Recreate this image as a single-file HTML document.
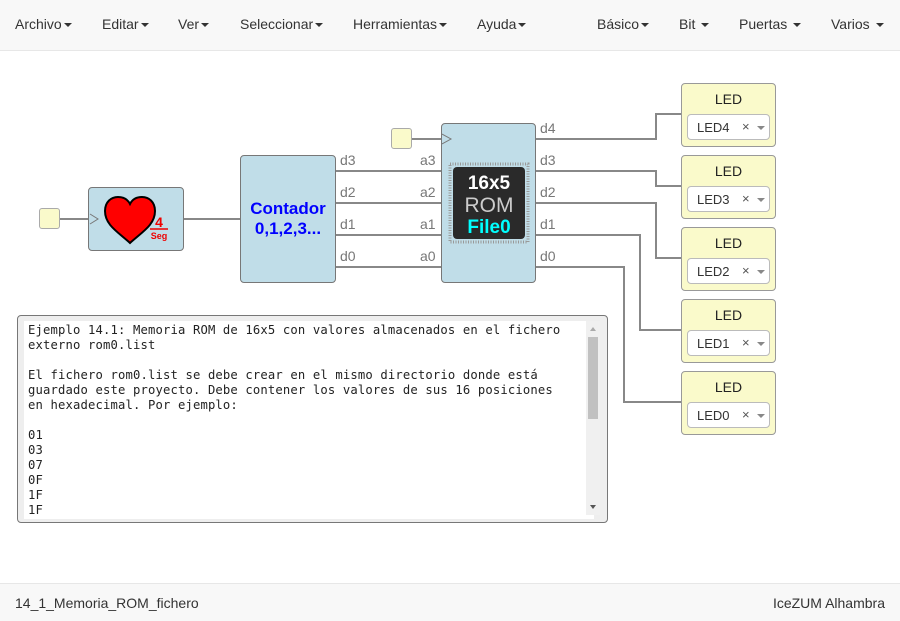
<!DOCTYPE html>
<html><head><meta charset="utf-8"><style>
body{margin:0;width:900px;height:620px;position:relative;background:#fff;font-family:"Liberation Sans",sans-serif;overflow:hidden}
.nav{position:absolute;left:0;top:0;width:900px;height:50px;background:#f8f8f8;border-bottom:1px solid #e7e7e7}
.nav span{position:absolute;top:16px;font-size:14px;color:#333}
.car{display:inline-block;width:0;height:0;border-left:4px solid transparent;border-right:4px solid transparent;border-top:4px solid #333;vertical-align:middle;margin-left:2px}
.foot{position:absolute;left:0;top:583px;width:900px;height:37px;background:#f8f8f8;border-top:1px solid #e7e7e7;font-size:14px;color:#333}
.blk{position:absolute;background:#c0dde8;border:1px solid #777;border-radius:4px;box-sizing:border-box}
.inp{position:absolute;width:21px;height:21px;background:#fafacb;border:1px solid #aaa;border-radius:3px;box-sizing:border-box}
.led{position:absolute;left:681px;width:95px;height:64px;background:#fafacb;border:1px solid #999;border-radius:4px;box-sizing:border-box}
.led .t{position:absolute;top:7px;width:100%;text-align:center;font-size:14px;color:#222}
.led .s{position:absolute;left:5px;top:30px;width:83px;height:26px;background:#fff;border:1px solid #bbb;border-radius:4px;box-sizing:border-box;font-size:13px;color:#333}
.lbl{position:absolute;font-size:14px;color:#777}
.ta{position:absolute;left:17px;top:315px;width:591px;height:208px;border:1px solid #777;border-radius:4px;box-sizing:border-box;background:#eee}
.ta pre{position:absolute;left:6px;top:5px;width:562px;height:194px;margin:0;padding:2px 4px;background:#fff;font-family:"DejaVu Sans Mono","Liberation Mono",monospace;font-size:12.2px;letter-spacing:0.16px;line-height:15px;color:#222;overflow:hidden;white-space:pre}
</style></head><body>
<div class="nav">
<span style="left:15px">Archivo<i class="car"></i></span>
<span style="left:102px">Editar<i class="car"></i></span>
<span style="left:178px">Ver<i class="car"></i></span>
<span style="left:240px">Seleccionar<i class="car"></i></span>
<span style="left:353px">Herramientas<i class="car"></i></span>
<span style="left:477px">Ayuda<i class="car"></i></span>
<span style="left:597px">Básico<i class="car"></i></span>
<span style="left:679px">Bit <i class="car"></i></span>
<span style="left:739px">Puertas <i class="car"></i></span>
<span style="left:831px">Varios <i class="car"></i></span>
</div>
<svg style="position:absolute;left:0;top:0" width="900" height="620">
<g stroke="#888" stroke-width="2" fill="none">
<line x1="59" y1="219" x2="89" y2="219"/>
<line x1="183" y1="219" x2="241" y2="219"/>
<line x1="411" y1="139" x2="442" y2="139"/>
<line x1="335" y1="171" x2="442" y2="171"/>
<line x1="335" y1="203" x2="442" y2="203"/>
<line x1="335" y1="235" x2="442" y2="235"/>
<line x1="335" y1="267" x2="442" y2="267"/>
<polyline points="535,139 656,139 656,114 682,114"/>
<polyline points="535,171 656,171 656,186 682,186"/>
<polyline points="535,203 656,203 656,258 682,258"/>
<polyline points="535,235 640,235 640,330 682,330"/>
<polyline points="535,267 624,267 624,402 682,402"/>
</g>
</svg>
<div class="inp" style="left:39px;top:208px"></div>
<div class="inp" style="left:391px;top:128px"></div>
<div class="blk" style="left:88px;top:187px;width:96px;height:64px">
<svg style="position:absolute;left:0;top:0" width="96" height="64"><polyline points="1,26 9,31 1,36" fill="none" stroke="#777"/>
<path d="M41,55 C29,44 16,37 16,23 C16,14 22,9 29,9 C35,9 39,12 41,16 C43,12 47,9 53,9 C60,9 66,14 66,23 C66,37 53,44 41,55Z" fill="#f00" stroke="#000" stroke-width="2"/>
<text x="70" y="39" font-family="Liberation Sans" font-weight="bold" font-size="14" fill="#e00" text-anchor="middle">4</text>
<line x1="61" y1="41" x2="79" y2="41" stroke="#e00" stroke-width="1.5"/>
<text x="70" y="51" font-family="Liberation Sans" font-weight="bold" font-size="9" fill="#e00" text-anchor="middle">Seg</text></svg>
</div>
<div class="blk" style="left:240px;top:155px;width:96px;height:128px">
<div style="position:absolute;top:43px;width:100%;text-align:center;font-weight:bold;font-size:17px;line-height:20px;color:#00f">Contador<br>0,1,2,3...</div>
</div>
<div class="blk" style="left:441px;top:123px;width:95px;height:160px">
<svg style="position:absolute;left:0;top:0" width="95" height="160"><polyline points="0,10 9,15 0,20" fill="none" stroke="#777"/>
<rect x="8" y="40" width="78" height="78" fill="none" stroke="#999" stroke-width="3" stroke-dasharray="1,1.5"/>
<rect x="11" y="43" width="72" height="72" rx="4" fill="#2a2a2a"/>
<text x="47" y="65" font-family="Liberation Sans" font-weight="bold" font-size="19" fill="#fff" text-anchor="middle">16x5</text>
<text x="47" y="88" font-family="Liberation Sans" font-size="21" fill="#ccc" text-anchor="middle">ROM</text>
<text x="47" y="109" font-family="Liberation Sans" font-weight="bold" font-size="19" fill="#0ff" text-anchor="middle">File0</text></svg>
</div>
<div class="lbl" style="left:340px;top:152px">d3</div>
<div class="lbl" style="left:340px;top:184px">d2</div>
<div class="lbl" style="left:340px;top:216px">d1</div>
<div class="lbl" style="left:340px;top:248px">d0</div>
<div class="lbl" style="left:420px;top:152px">a3</div>
<div class="lbl" style="left:420px;top:184px">a2</div>
<div class="lbl" style="left:420px;top:216px">a1</div>
<div class="lbl" style="left:420px;top:248px">a0</div>
<div class="lbl" style="left:540px;top:120px">d4</div>
<div class="lbl" style="left:540px;top:152px">d3</div>
<div class="lbl" style="left:540px;top:184px">d2</div>
<div class="lbl" style="left:540px;top:216px">d1</div>
<div class="lbl" style="left:540px;top:248px">d0</div>
<div class="led" style="top:83px"><div class="t">LED</div><div class="s"><span style="position:absolute;left:9px;top:5px">LED4</span><span style="position:absolute;left:54px;top:4px;color:#555">×</span><i class="car" style="position:absolute;left:67px;top:11px;border-top-color:#888"></i></div></div>
<div class="led" style="top:155px"><div class="t">LED</div><div class="s"><span style="position:absolute;left:9px;top:5px">LED3</span><span style="position:absolute;left:54px;top:4px;color:#555">×</span><i class="car" style="position:absolute;left:67px;top:11px;border-top-color:#888"></i></div></div>
<div class="led" style="top:227px"><div class="t">LED</div><div class="s"><span style="position:absolute;left:9px;top:5px">LED2</span><span style="position:absolute;left:54px;top:4px;color:#555">×</span><i class="car" style="position:absolute;left:67px;top:11px;border-top-color:#888"></i></div></div>
<div class="led" style="top:299px"><div class="t">LED</div><div class="s"><span style="position:absolute;left:9px;top:5px">LED1</span><span style="position:absolute;left:54px;top:4px;color:#555">×</span><i class="car" style="position:absolute;left:67px;top:11px;border-top-color:#888"></i></div></div>
<div class="led" style="top:371px"><div class="t">LED</div><div class="s"><span style="position:absolute;left:9px;top:5px">LED0</span><span style="position:absolute;left:54px;top:4px;color:#555">×</span><i class="car" style="position:absolute;left:67px;top:11px;border-top-color:#888"></i></div></div>
<div class="ta"><pre>Ejemplo 14.1: Memoria ROM de 16x5 con valores almacenados en el fichero
externo rom0.list

El fichero rom0.list se debe crear en el mismo directorio donde está
guardado este proyecto. Debe contener los valores de sus 16 posiciones
en hexadecimal. Por ejemplo:

01
03
07
0F
1F
1F</pre>
<div style="position:absolute;left:568px;top:5px;width:14px;height:194px;background:#f0f0f0"></div>
<div style="position:absolute;left:570px;top:21px;width:10px;height:82px;background:#c1c1c1"></div>
<div style="position:absolute;left:572px;top:11px;border-left:3px solid transparent;border-right:3px solid transparent;border-bottom:4px solid #aaa"></div>
<div style="position:absolute;left:572px;top:189px;border-left:3px solid transparent;border-right:3px solid transparent;border-top:4px solid #555"></div>
</div>
<div class="foot"><span style="position:absolute;left:15px;top:11px">14_1_Memoria_ROM_fichero</span><span style="position:absolute;right:15px;top:11px">IceZUM Alhambra</span></div>
</body></html>
